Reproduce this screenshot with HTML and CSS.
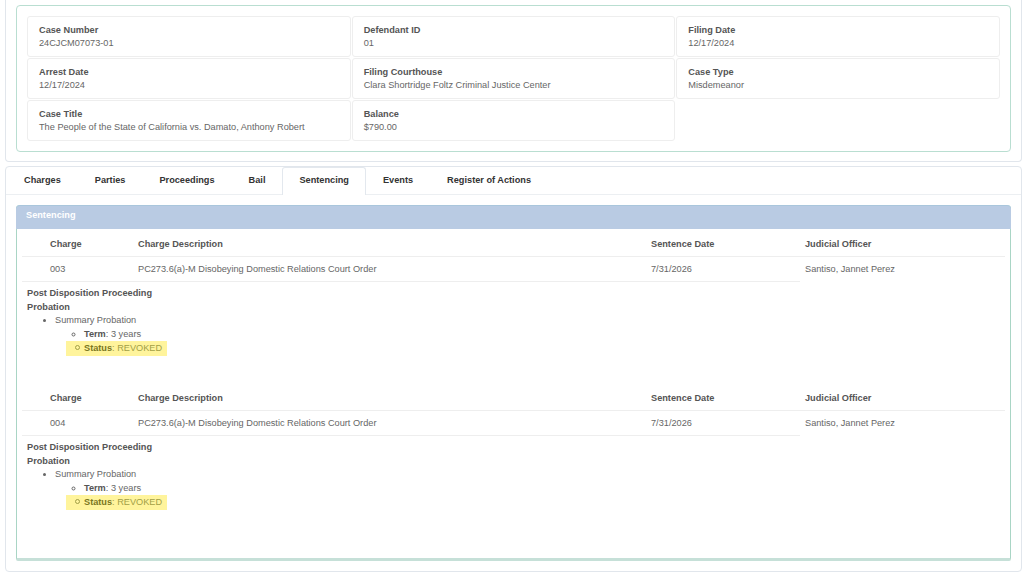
FILE: index.html
```html
<!DOCTYPE html>
<html lang="en">
<head>
    <meta charset="UTF-8">
    <meta name="viewport" content="width=device-width, initial-scale=1.0">
    <title>Case Detail - Sentencing</title>
    <link rel="stylesheet" href="styles.css">
</head>
<body>
    <div class="page">
        <div class="panel panel-top">
            <div class="case-box">
                <div class="case-grid">
                    <div class="case-cell"><div class="label">Case Number</div><div class="value">24CJCM07073-01</div></div>
                    <div class="case-cell"><div class="label">Defendant ID</div><div class="value">01</div></div>
                    <div class="case-cell"><div class="label">Filing Date</div><div class="value">12/17/2024</div></div>
                    <div class="case-cell"><div class="label">Arrest Date</div><div class="value">12/17/2024</div></div>
                    <div class="case-cell"><div class="label">Filing Courthouse</div><div class="value">Clara Shortridge Foltz Criminal Justice Center</div></div>
                    <div class="case-cell"><div class="label">Case Type</div><div class="value">Misdemeanor</div></div>
                    <div class="case-cell"><div class="label">Case Title</div><div class="value">The People of the State of California vs. Damato, Anthony Robert</div></div>
                    <div class="case-cell"><div class="label">Balance</div><div class="value">$790.00</div></div>
                </div>
            </div>
        </div>

        <div class="panel panel-tabs">
            <ul class="tabs">
                <li>Charges</li>
                <li>Parties</li>
                <li>Proceedings</li>
                <li>Bail</li>
                <li class="active">Sentencing</li>
                <li>Events</li>
                <li>Register of Actions</li>
            </ul>

            <div class="sent-panel">
                <div class="sent-head">Sentencing</div>
                <div class="sent-body">

                    <div class="sent-block">
                        <div class="sent-row sent-th">
                            <div>Charge</div><div>Charge Description</div><div>Sentence Date</div><div>Judicial Officer</div>
                        </div>
                        <div class="sent-row sent-td">
                            <div>003</div><div>PC273.6(a)-M Disobeying Domestic Relations Court Order</div><div>7/31/2026</div><div>Santiso, Jannet Perez</div>
                        </div>
                        <div class="details">
                            <div class="strong">Post Disposition Proceeding</div>
                            <div class="strong">Probation</div>
                            <ul class="disc">
                                <li>Summary Probation
                                    <ul class="circle">
                                        <li><b>Term</b>: 3 years</li>
                                        <li class="flag"><b>Status</b>: REVOKED</li>
                                    </ul>
                                </li>
                            </ul>
                        </div>
                    </div>

                    <div class="sent-block">
                        <div class="sent-row sent-th">
                            <div>Charge</div><div>Charge Description</div><div>Sentence Date</div><div>Judicial Officer</div>
                        </div>
                        <div class="sent-row sent-td">
                            <div>004</div><div>PC273.6(a)-M Disobeying Domestic Relations Court Order</div><div>7/31/2026</div><div>Santiso, Jannet Perez</div>
                        </div>
                        <div class="details">
                            <div class="strong">Post Disposition Proceeding</div>
                            <div class="strong">Probation</div>
                            <ul class="disc">
                                <li>Summary Probation
                                    <ul class="circle">
                                        <li><b>Term</b>: 3 years</li>
                                        <li class="flag"><b>Status</b>: REVOKED</li>
                                    </ul>
                                </li>
                            </ul>
                        </div>
                    </div>

                </div>
            </div>
        </div>
    </div>
</body>
</html>
```

FILE: styles.css
```css
html, body {
    height: 100%;
}
body {
    margin: 0;
    font-family: 'Liberation Sans', Arial, sans-serif;
    font-size: 9.2px;
    color: #666;
    background: #fff;
}
.page {
    display: flex;
    flex-direction: column;
    height: 574px;
    padding: 0 2px 0 5px;
    box-sizing: border-box;
}
.panel {
    border: 1px solid #e1e6ec;
    border-radius: 4px;
    background: #fff;
}
.panel-top {
    border-top: none;
    border-radius: 0 0 4px 4px;
    padding: 5px 10px 9px;
}
.case-box {
    border: 1px solid #b9ded1;
    border-radius: 4px;
    padding: 10px;
}
.case-grid {
    display: grid;
    grid-template-columns: repeat(3, 1fr);
    gap: 1px;
}
.case-cell {
    border: 1px solid #eeeeee;
    border-radius: 3px;
    padding: 7px 11px 6px;
    line-height: 13px;
    height: 41px;
    box-sizing: border-box;
}
.label {
    font-weight: bold;
    color: #555;
}
.value {
    color: #666;
}

/* tabs + sentencing section */
.panel-tabs {
    flex: 1;
    margin: 4px 0 2px;
    display: flex;
    flex-direction: column;
    padding-bottom: 10px;
}
.tabs {
    list-style-type: none;
    margin: 0;
    padding: 0 0 0 1px;
    display: flex;
    border-bottom: 1px solid #eceff2;
    height: 27px;
}
.tabs li {
    padding: 0 16px;
    line-height: 24px;
    font-weight: bold;
    color: #333;
    border: 1px solid transparent;
    border-bottom: none;
}
.tabs li.active {
    background: #fff;
    border-color: #e3e8ee;
    border-radius: 3px 3px 0 0;
    height: 27px;
    margin-bottom: -1px;
}
.sent-panel {
    flex: 1;
    margin: 10px 10px 0;
    border: 1px solid #a9d5c5;
    border-bottom: 3px solid #c6e0d8;
    border-top: none;
    border-radius: 4px 4px 2px 2px;
    display: flex;
    flex-direction: column;
}
.sent-head {
    background: #b9cbe3;
    color: #fff;
    font-weight: bold;
    height: 23px;
    line-height: 19px;
    padding-left: 10px;
    border-radius: 4px 4px 0 0;
    margin: 0 -1px;
    border-top: 1px solid #a9c6dc;
}
.sent-body {
    padding: 6px 5px 0;
}
.sent-block {
    margin-bottom: 33px;
}
.sent-row {
    display: grid;
    grid-template-columns: 88px 513px 154px 1fr;
}
.sent-row div {
    padding-left: 28px;
}
.sent-th {
    font-weight: bold;
    color: #555;
    height: 21px;
    line-height: 18px;
    border-bottom: 1px solid #eeeeee;
}
.sent-td {
    height: 24px;
    line-height: 24px;
    background: linear-gradient(#eeeeee, #eeeeee) no-repeat left bottom / 778px 1px;
    padding-bottom: 1px;
}
.details {
    padding: 5px 5px 0;
    line-height: 13.5px;
}
.strong {
    font-weight: bold;
    color: #555;
}
.disc {
    margin: 0;
    padding-left: 28px;
    list-style-type: disc;
}
.circle {
    margin: 0;
    padding-left: 29px;
    list-style-type: circle;
}
.circle b {
    color: #555;
}
/* highlighted row: bullet drawn by hand so the yellow covers it */
.flag {
    list-style: none;
    background: #fff49c;
    width: fit-content;
    margin-left: -18px;
    padding: 1px 5px 1px 9px;
    line-height: 13px;
    color: #a29f46;
}
.flag::before {
    content: "";
    display: inline-block;
    width: 3px;
    height: 3px;
    border: 1px solid #a29f46;
    border-radius: 50%;
    margin-right: 4px;
    vertical-align: 1px;
}
.flag b {
    color: #7a7722;
}
```
